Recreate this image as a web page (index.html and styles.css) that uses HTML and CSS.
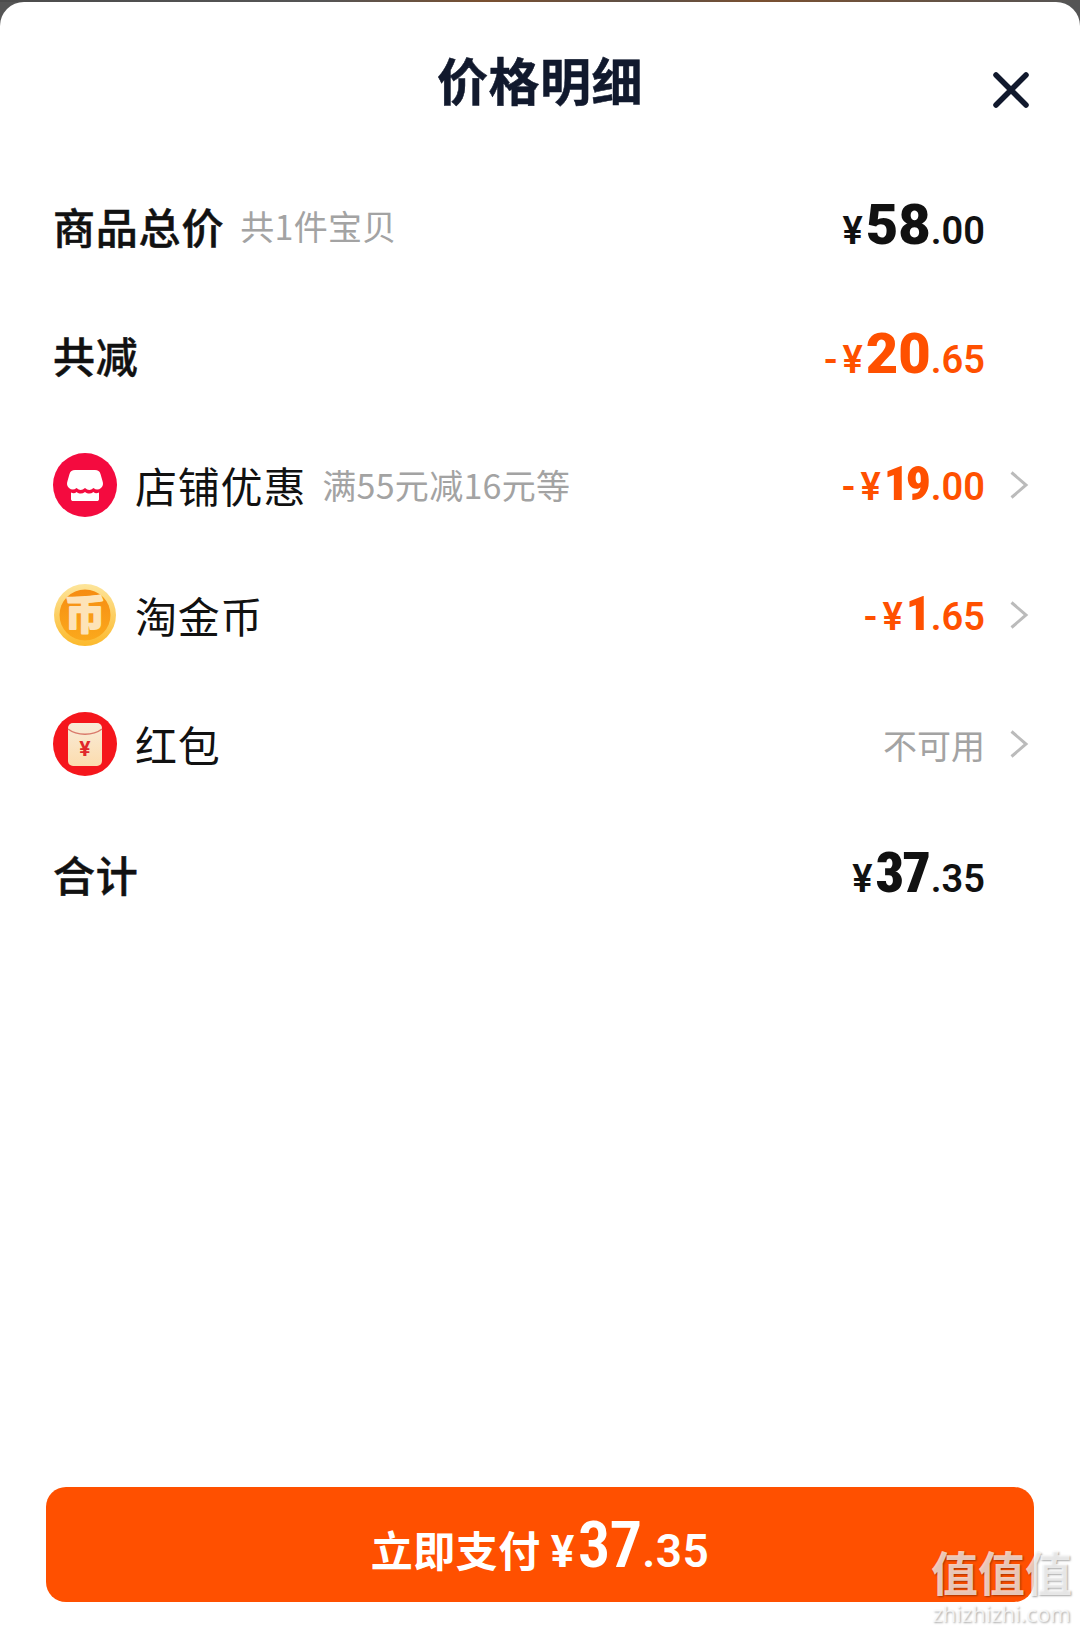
FILE: index.html
```html
<!DOCTYPE html>
<html lang="zh-CN">
<head>
  <meta charset="UTF-8" />
  <title>价格明细</title>
  <link rel="stylesheet" href="styles.css">
</head>
<body>

<!-- sliver of the page behind the sheet -->
<div class="fondo"></div>

<div class="hoja">
  <div class="cabecera">
    <h2>价格明细</h2>
    <svg class="cerrar" viewBox="0 0 36 36"><path d="M3 3 L33 33 M33 3 L3 33" fill="none" stroke="#11192d" stroke-width="5.500" stroke-linecap="round"/></svg>
  </div>

  <div class="filas">
    <div class="fila">
      <span class="nombre fuerte">商品总价</span>
      <span class="nota">共1件宝贝</span>
      <span class="precio"><i class="yen">¥</i><b>58</b><i class="cent">.00</i></span>
    </div>

    <div class="fila">
      <span class="nombre fuerte">共减</span>
      <span class="precio naranja"><i class="menos">-</i><i class="yen">¥</i><b>20</b><i class="cent">.65</i></span>
    </div>

    <div class="fila">
      <svg class="icono" viewBox="0 0 64 64">
        <circle cx="32" cy="32" r="32" fill="#f40b3f"/>
        <path d="M22 17 H42 C45 17 46.500 18 47.500 21 L49.500 28 C50.500 31 50 33 48 35 C45.500 37 43 37 40.500 35 C37.500 37.500 35 37.500 32 35 C29 37.500 26.500 37.500 23.500 35 C21 37 18.500 37 16 35 C14 33 13.500 31 14.500 28 L16.500 21 C17.500 18 19 17 22 17 Z" fill="#fff"/>
        <path d="M18 39.500 C20 40.500 22 40.500 23.500 39 C26.500 41 29 41 32 39 C35 41 37.500 41 40.500 39 C42 40.500 44 40.500 46 39.500 V46 C46 47.500 45 48 44 48 H20 C19 48 18 47.500 18 46 Z" fill="#fff"/>
      </svg>
      <span class="nombre">店铺优惠</span>
      <span class="nota">满55元减16元等</span>
      <span class="precio naranja medio"><i class="menos">-</i><i class="yen">¥</i><b>19</b><i class="cent">.00</i></span>
      <svg class="flecha" viewBox="0 0 20 30"><path d="M2.500 2.500 L17 15 L2.500 27.500" fill="none" stroke="#bbb" stroke-width="3"/></svg>
    </div>

    <div class="fila">
      <svg class="icono" viewBox="0 0 64 64">
        <defs>
          <linearGradient id="aro" x1="0" y1="0" x2="0" y2="1">
            <stop offset="0" stop-color="#fde59b"/>
            <stop offset="1" stop-color="#fcb92c"/>
          </linearGradient>
          <linearGradient id="moneda" x1="0" y1="0" x2="0" y2="1">
            <stop offset="0" stop-color="#f68c12"/>
            <stop offset="1" stop-color="#fba91c"/>
          </linearGradient>
        </defs>
        <circle cx="32" cy="32" r="31" fill="url(#aro)"/>
        <circle cx="32" cy="32" r="25.500" fill="url(#moneda)"/>
        <text class="moneda-letra" x="32" y="46" text-anchor="middle">币</text>
      </svg>
      <span class="nombre">淘金币</span>
      <span class="precio naranja medio"><i class="menos">-</i><i class="yen">¥</i><b>1</b><i class="cent">.65</i></span>
      <svg class="flecha" viewBox="0 0 20 30"><path d="M2.500 2.500 L17 15 L2.500 27.500" fill="none" stroke="#bbb" stroke-width="3"/></svg>
    </div>

    <div class="fila">
      <svg class="icono" viewBox="0 0 64 64">
        <defs>
          <linearGradient id="sobre" x1="0" y1="0" x2="0" y2="1">
            <stop offset="0" stop-color="#f8ecd9"/>
            <stop offset="1" stop-color="#fcdcae"/>
          </linearGradient>
        </defs>
        <circle cx="32" cy="32" r="32" fill="#f5161c"/>
        <rect x="15" y="11" width="34" height="43" rx="5" fill="url(#sobre)"/>
        <path d="M15 17 C24 24 40 24 49 17" fill="none" stroke="#d9796a" stroke-width="1.500"/>
        <text class="sobre-letra" x="32" y="44" text-anchor="middle">¥</text>
      </svg>
      <span class="nombre">红包</span>
      <span class="nota-final">不可用</span>
      <svg class="flecha" viewBox="0 0 20 30"><path d="M2.500 2.500 L17 15 L2.500 27.500" fill="none" stroke="#bbb" stroke-width="3"/></svg>
    </div>

    <div class="fila">
      <span class="nombre fuerte">合计</span>
      <span class="precio"><i class="yen">¥</i><b class="justo">37</b><i class="cent">.35</i></span>
    </div>
  </div>

  <div class="pie">
    <button class="pagar">立即支付<i class="yen">¥</i><b>37</b><i class="cent">.35</i></button>
  </div>
</div>

<!-- marca de agua -->
<div class="marca">
  <div class="marca-grande">值值值</div>
  <div class="marca-chica">zhizhizhi.com</div>
</div>

</body>
</html>
```

FILE: styles.css
```css
body {
  margin: 0;
  width: 1080px;
  height: 1632px;
  position: relative;
  overflow: hidden;
  background: #555;
  font-family: "Noto Sans CJK SC", "Noto Sans", sans-serif;
  color: #111;
}

i {
  font-style: normal;
}

.fondo {
  height: 2px;
  background: linear-gradient(90deg, #4c4c4c 0, #555 30%, #7a5030 45%, #5c5048 60%, #7a5030 70%, #555 100%);
}

.hoja {
  height: 1630px;
  background: #fff;
  border-radius: 24px 24px 0 0;
  position: relative;
  display: flex;
  flex-direction: column;
}

.cabecera {
  height: 159px;
  display: flex;
  justify-content: center;
  position: relative;
}

h2 {
  margin: 47px 0 0;
  font-size: 51px;
  line-height: 60px;
  font-weight: 700;
  letter-spacing: 0.5px;
  color: #11192d;
  -webkit-text-stroke: 0.5px #11192d;
}

.cerrar {
  position: absolute;
  top: 70px;
  right: 51px;
  width: 36px;
  height: 36px;
}

.filas {
  padding: 0 51px 0 53px;
}

.fila {
  height: 129.6px;
  display: flex;
  align-items: center;
}

.nombre {
  font-size: 42px;
  line-height: 50px;
  letter-spacing: 0.8px;
}

.fuerte {
  font-weight: 500;
  -webkit-text-stroke: 0.5px #111;
}

.icono {
  width: 64px;
  height: 64px;
  margin-right: 18px;
  flex: none;
}

.nota {
  margin-left: 16px;
  color: #a3a3a3;
  font-size: 34px;
  line-height: 40px;
  letter-spacing: 0.3px;
}

.nota-final {
  margin-left: auto;
  color: #a3a3a3;
  font-size: 34px;
}

.precio {
  margin-left: auto;
  margin-right: 44px;
  font-family: Roboto, sans-serif;
  font-stretch: 92%;
  font-weight: 600;
  display: flex;
  align-items: baseline;
  color: #111;
  transform: translateY(-1px);
}

.medio {
  margin-right: 0;
}

.naranja {
  color: #ff5000;
}

.precio b {
  font-size: 56px;
  line-height: 60px;
}

.precio .yen {
  font-size: 38px;
  margin-right: 3px;
}

.precio .menos {
  font-size: 38px;
  margin-right: 5px;
}

.precio .cent {
  font-size: 38px;
}

.medio b {
  font-size: 49px;
  font-stretch: 80%;
  letter-spacing: -3px;
  margin-right: 3px;
}

.precio .justo {
  font-stretch: 85%;
  letter-spacing: -2px;
  margin-right: 2px;
}

.flecha {
  width: 20px;
  height: 30px;
  margin-left: 24px;
  flex: none;
}

.moneda-letra {
  font-family: "Noto Sans CJK SC", sans-serif;
  font-size: 40px;
  font-weight: 700;
  fill: #fde3b8;
  stroke: #fde3b8;
  stroke-width: 2.5px;
  stroke-linejoin: round;
}

.sobre-letra {
  font-family: Roboto, sans-serif;
  font-size: 21px;
  font-weight: 700;
  fill: #e0272b;
}

.pie {
  margin-top: auto;
  padding: 0 46px 30px;
}

.pagar {
  width: 100%;
  height: 115px;
  border: none;
  border-radius: 20px;
  background-color: #ff5000;
  color: #fff;
  font-family: "Noto Sans CJK SC", sans-serif;
  font-size: 42px;
  font-weight: 700;
  letter-spacing: 0.5px;
  display: flex;
  align-items: baseline;
  justify-content: center;
  padding-top: 20px;
}

.pagar .yen {
  font-family: Roboto, sans-serif;
  font-stretch: 92%;
  font-size: 44px;
  margin: 0 3px 0 10px;
}

.pagar b {
  font-family: Roboto, sans-serif;
  font-stretch: 82%;
  font-weight: 600;
  font-size: 65px;
  letter-spacing: -1px;
  margin-right: 1px;
}

.pagar .cent {
  font-family: Roboto, sans-serif;
  font-stretch: 92%;
  font-weight: 600;
  font-size: 46px;
}

.marca {
  position: absolute;
  right: 8px;
  bottom: 7px;
  text-align: center;
  color: rgba(255, 255, 255, 0.72);
  text-shadow: 1px 1px 2px rgba(0, 0, 0, 0.35);
}

.marca-grande {
  font-size: 47px;
  line-height: 48px;
  font-weight: 700;
}

.marca-chica {
  margin-top: 6px;
  font-family: "Open Sans", sans-serif;
  font-size: 22px;
  line-height: 24px;
}
```
